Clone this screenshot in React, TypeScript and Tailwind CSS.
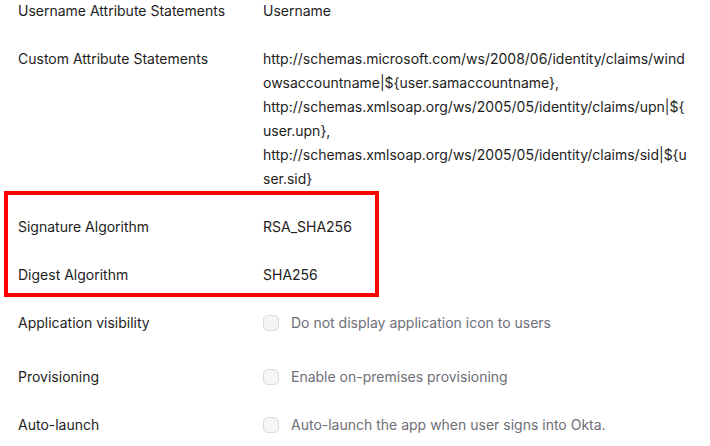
import React from 'react';

const customAttrs =
  'http://schemas.microsoft.com/ws/2008/06/identity/claims/windowsaccountname|${user.samaccountname}, http://schemas.xmlsoap.org/ws/2005/05/identity/claims/upn|${user.upn}, http://schemas.xmlsoap.org/ws/2005/05/identity/claims/sid|${user.sid}';

function Row({ label, children, className = '' }: { label: string; children: React.ReactNode; className?: string }) {
  return (
    <div className={`flex ${className}`}>
      <div className="w-[245px] shrink-0 text-[#1d1d21]">{label}</div>
      <div className="w-[426px] break-words text-[#1d1d21]">{children}</div>
    </div>
  );
}

function CheckRow({ label, text, className = '' }: { label: string; text: string; className?: string }) {
  return (
    <Row label={label} className={className}>
      <label className="flex items-center gap-[12px] text-[#6e6e78]">
        <span className="w-[16px] h-[16px] rounded-[5px] border border-[#d9d9de] bg-[#f5f5f7]" />
        {text}
      </label>
    </Row>
  );
}

export default function App() {
  return (
    <div
      className="relative w-[710px] h-[446px] overflow-hidden bg-white pl-[18px] -mt-px text-[14px] leading-[24px]"
      style={{ fontFamily: 'Inter, "Noto Sans", sans-serif' }}
    >
      <div className="flex flex-col gap-6">
        <Row label="Username Attribute Statements">Username</Row>
        <Row label="Custom Attribute Statements">{customAttrs}</Row>
        <Row label="Signature Algorithm">RSA_SHA256</Row>
        <Row label="Digest Algorithm">SHA256</Row>
        <CheckRow label="Application visibility" text="Do not display application icon to users" className="mb-[6px]" />
        <CheckRow label="Provisioning" text="Enable on-premises provisioning" />
        <CheckRow label="Auto-launch" text="Auto-launch the app when user signs into Okta." />
      </div>

      {/* highlight annotation */}
      <div className="absolute left-[4px] top-[192px] w-[375px] h-[106px] border-[4px] border-[#ff0000] pointer-events-none" />
    </div>
  );
}
